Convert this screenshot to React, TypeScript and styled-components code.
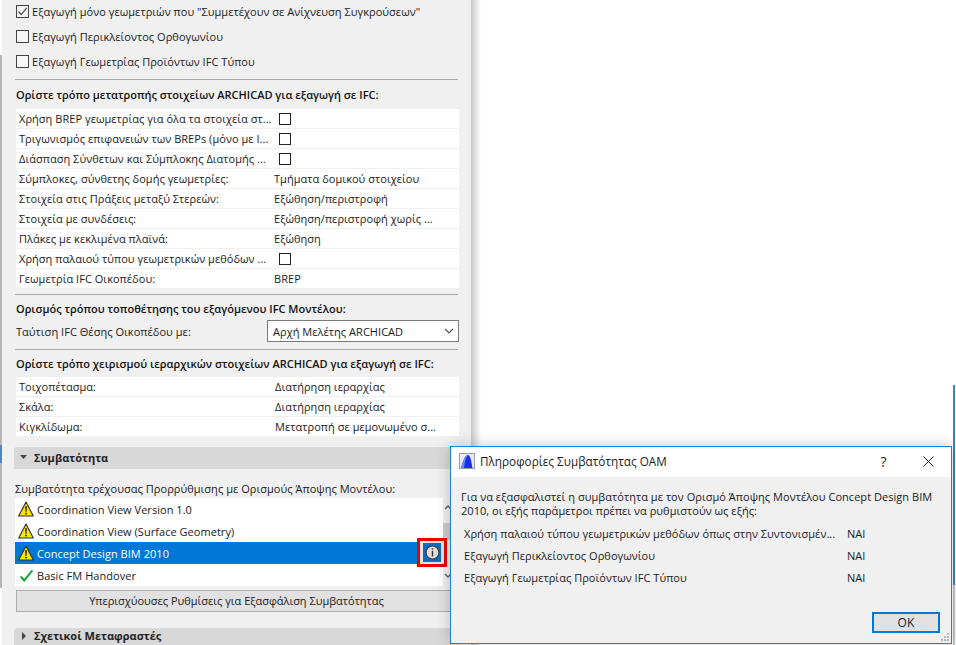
import React, { FC } from 'react';
import styled, { createGlobalStyle } from 'styled-components';

const GlobalStyle = createGlobalStyle`
    html, body {
        margin: 0;
        padding: 0;
        background: #fff;
    }
    body {
        width: 956px;
        height: 645px;
        overflow: hidden;
        font-family: 'Open Sans', 'Noto Sans', sans-serif;
        font-size: 11px;
        letter-spacing: 0.04px;
        color: #1a1a24;
    }
`;

const Screen = styled.div`
    position: relative;
    display: flex;
    width: 956px;
    height: 645px;
    overflow: hidden;
    background: #fff;
`;
const LeftEdge = styled.div`
    width: 2px;
    margin-top: 55px;
    height: 533px;
    background: linear-gradient(#b5b5b5 0 390px, #4a86c0 390px 408px, #b5b5b5 408px);
    flex: none;
`;
const Panel = styled.div`
    width: 470px;
    height: 645px;
    flex: none;
    box-sizing: border-box;
    padding: 0 12px 0 11px;
    background: #f0f0f0;
    border-right: 1px solid #c8c8c8;
`;
const PanelShadow = styled.div`
    width: 9px;
    height: 645px;
    flex: none;
    background: linear-gradient(90deg, #cfcfcf, #fff);
`;
const DesktopEdge = styled.div`
    position: absolute;
    top: 385px;
    right: 1px;
    width: 2px;
    height: 260px;
    background: linear-gradient(#2f86d6 0 200px, #c8c8c8 200px);
`;
const CheckStack = styled.div`
    margin-top: -1px;
`;
const CheckLine = styled.label`
    display: flex;
    align-items: center;
    gap: 3px;
    height: 25px;
    padding-left: 3px;
`;
const Box = styled.span<{ $small?: boolean }>`
    display: flex;
    align-items: center;
    justify-content: center;
    width: ${(p) => (p.$small ? 10 : 11)}px;
    height: ${(p) => (p.$small ? 10 : 11)}px;
    flex: none;
    border: 1px solid ${(p) => (p.$small ? '#222' : '#444')};
    background: ${(p) => (p.$small ? '#fff' : '#f6f6f6')};
`;
const Divider = styled.div<{ $top: number }>`
    height: 1px;
    background: #a8a8a8;
    margin: ${(p) => p.$top}px 1px 0 2px;
`;
const SectionTitle = styled.div<{ $height: number }>`
    display: flex;
    align-items: center;
    height: ${(p) => p.$height}px;
    padding-left: 3px;
    font-weight: 600;
    letter-spacing: 0;
    color: #111;
`;
const Table = styled.div`
    display: flex;
    flex-direction: column;
    gap: 1px;
    margin-left: 3px;
`;
const Row = styled.div<{ $labelWidth: number }>`
    display: grid;
    grid-template-columns: ${(p) => p.$labelWidth}px 1fr;
    align-items: center;
    height: 19px;
    background: #fff;
    padding-left: 3px;
`;
const Cell = styled.div`
    white-space: nowrap;
    overflow: hidden;
`;
const BoxCell = styled.div`
    display: flex;
    padding-left: 5px;
`;
const SelectRow = styled.div`
    display: flex;
    align-items: center;
    justify-content: space-between;
    height: 22px;
    padding-left: 3px;
    margin-top: -1px;
`;
const Select = styled.div`
    display: flex;
    align-items: center;
    justify-content: space-between;
    box-sizing: border-box;
    width: 192px;
    height: 22px;
    padding: 0 4px 0 5px;
    background: #fff;
    border: 1px solid #7a7a7a;
`;
const AccordionBar = styled.div<{ $top: number; $height: number }>`
    display: flex;
    align-items: center;
    gap: 7px;
    box-sizing: border-box;
    height: ${(p) => p.$height}px;
    margin: ${(p) => p.$top}px 0 0 1px;
    padding: 0 0 2px 6px;
    border-radius: 3px 3px 0 0;
    background: #d8d8d8;
    font-weight: 700;
    letter-spacing: 0;
    color: #222;
`;
const Caption = styled.div`
    margin: 10px 0 1px 2px;
    height: 18px;
    display: flex;
    align-items: center;
    white-space: nowrap;
`;
const ListWrap = styled.div`
    position: relative;
    margin-left: 2px;
`;
const List = styled.div`
    width: 428px;
    background: #fff;
`;
const ListRow = styled.div<{ $selected?: boolean }>`
    display: flex;
    align-items: center;
    gap: 3px;
    height: 22px;
    padding-left: 3px;
    background: ${(p) => (p.$selected ? '#0078d7' : 'transparent')};
    color: ${(p) => (p.$selected ? '#fff' : '#1a1a24')};
`;
const RowIcon = styled.span`
    display: flex;
    align-items: center;
    justify-content: center;
    width: 16px;
    flex: none;
`;
const ScrollTrack = styled.div`
    position: absolute;
    top: 0;
    left: 428px;
    width: 10px;
    height: 87px;
    display: flex;
    flex-direction: column;
    align-items: center;
    justify-content: space-between;
    padding: 7px 0;
    box-sizing: border-box;
`;
const ScrollThumb = styled.div`
    position: absolute;
    top: 25px;
    left: 0;
    width: 16px;
    height: 17px;
    background: #cdcdcd;
`;
const InfoHighlight = styled.div`
    position: absolute;
    top: 40px;
    left: 402px;
    width: 30px;
    height: 29px;
    box-sizing: border-box;
    border: 3px solid #ee0000;
    background: #e4e4e4;
    display: flex;
    align-items: center;
    justify-content: center;
`;
const InfoButton = styled.div`
    width: 18px;
    height: 19px;
    background: #0f6cbd;
    display: flex;
    align-items: center;
    justify-content: center;
`;
const WideButton = styled.div`
    display: flex;
    align-items: center;
    justify-content: center;
    box-sizing: border-box;
    width: 441px;
    height: 22px;
    margin: 4px 0 0 3px;
    padding-bottom: 1px;
    background: #e1e1e1;
    border: 1px solid #adadad;
    letter-spacing: 0;
`;

const Dialog = styled.div`
    position: absolute;
    left: 450px;
    top: 446px;
    width: 502px;
    height: 198px;
    box-sizing: border-box;
    display: flex;
    flex-direction: column;
    border: 1px solid #1883d7;
    background: #f0f0f0;
    box-shadow: 0 0 14px rgba(0, 0, 0, 0.22);
`;
const TitleBar = styled.div`
    display: flex;
    align-items: center;
    box-sizing: border-box;
    height: 30px;
    flex: none;
    background: #fff;
    padding: 0 0 2px 8px;
`;
const TitleText = styled.div`
    margin-left: 5px;
    font-size: 11.7px;
    flex: 1;
`;
const TitleGlyph = styled.div`
    display: flex;
    align-items: center;
    justify-content: center;
    width: 45px;
    font-size: 14px;
`;
const DialogBody = styled.div`
    display: flex;
    flex-direction: column;
    flex: 1;
    padding: 13px 10px 0;
`;
const DialogText = styled.div`
    line-height: 14px;
    white-space: nowrap;
`;
const InfoRows = styled.div`
    display: flex;
    flex-direction: column;
    margin-top: 4px;
`;
const InfoRow = styled.div`
    display: grid;
    grid-template-columns: 383px 1fr;
    align-items: center;
    height: 22px;
    padding-left: 3px;
`;
const DialogFooter = styled.div`
    display: flex;
    justify-content: flex-end;
    margin: auto 1px 0 0;
    padding-bottom: 10px;
`;
const OkButton = styled.div`
    display: flex;
    align-items: center;
    justify-content: center;
    box-sizing: border-box;
    width: 68px;
    height: 21px;
    background: #e1e1e1;
    border: 2px solid #0078d7;
    font-size: 12px;
`;
const Grip = styled.div`
    position: absolute;
    right: 1px;
    bottom: 1px;
    display: flex;
`;

const CheckBox: FC<{ checked?: boolean; small?: boolean }> = ({ checked, small }) => (
    <Box $small={small}>
        {checked && (
            <svg width='11' height='11' viewBox='0 0 11 11'>
                <path d='M1.5 5.5 4.2 8.5 9.8 1.8' fill='none' stroke='#555' strokeWidth='1.3' />
            </svg>
        )}
    </Box>
);

const Warning: FC = () => (
    <svg width='16' height='16' viewBox='0 0 16 16'>
        <path d='M8 1 15.3 15H.7Z' fill='#ffe500' stroke='#333' strokeWidth='1.2' strokeLinejoin='round' />
        <path d='M7.1 5.2h1.8L8.5 11h-1Z' fill='#222' />
        <rect x='7.2' y='11.8' width='1.6' height='1.6' fill='#222' />
    </svg>
);

const Tick: FC = () => (
    <svg width='15' height='13' viewBox='0 0 15 13'>
        <path d='M1.6 7.4 5.2 11.4 13.4 1.4' fill='none' stroke='#1fa64a' strokeWidth='2.2' />
    </svg>
);

const Triangle: FC<{ open?: boolean }> = ({ open }) => (
    <svg width='7' height='8' viewBox='0 0 7 8'>
        <path d={open ? 'M0 2H7L3.5 6Z' : 'M2 0 6 4 2 8Z'} fill='#444' />
    </svg>
);

const Chevron: FC = () => (
    <svg width='10' height='6' viewBox='0 0 10 6'>
        <path d='M1 1 5 5 9 1' fill='none' stroke='#555' strokeWidth='1.1' />
    </svg>
);

const ScrollArrow: FC<{ up?: boolean }> = ({ up }) => (
    <svg width='8' height='5' viewBox='0 0 8 5'>
        <path d={up ? 'M1 4 4 1 7 4' : 'M1 1 4 4 7 1'} fill='none' stroke='#606060' strokeWidth='1.4' />
    </svg>
);

const AppLogo: FC = () => (
    <svg width='16' height='16' viewBox='0 0 16 16'>
        <rect x='0.5' y='0.5' width='15' height='15' fill='#e8eaf6' stroke='#9a9aa8' />
        <path d='M2 15C4 8 6 2 9 2c2.5 0 3.5 7 4.5 13Z' fill='#1a30f0' />
        <path d='M2 15C4 8 6 2 9 2 6.5 5 5.5 10 5 15Z' fill='#6d88f5' />
    </svg>
);

const InfoIcon: FC = () => (
    <svg width='15' height='15' viewBox='0 0 15 15'>
        <circle cx='7.5' cy='7.5' r='6.5' fill='#dedede' stroke='#3a3a3a' strokeWidth='1.2' />
        <rect x='6.8' y='3.2' width='1.4' height='1.5' fill='#333' />
        <rect x='6.8' y='5.9' width='1.4' height='5.6' fill='#333' />
    </svg>
);

const Close: FC = () => (
    <svg width='11' height='11' viewBox='0 0 11 11'>
        <path d='M.5.5 10.5 10.5M10.5.5.5 10.5' stroke='#222' strokeWidth='1' />
    </svg>
);

const GripDots: FC = () => (
    <svg width='10' height='10' viewBox='0 0 10 10' fill='#b4b4b4'>
        <rect x='7' y='1' width='2' height='2' />
        <rect x='4' y='4' width='2' height='2' />
        <rect x='7' y='4' width='2' height='2' />
        <rect x='1' y='7' width='2' height='2' />
        <rect x='4' y='7' width='2' height='2' />
        <rect x='7' y='7' width='2' height='2' />
    </svg>
);

const conversionRows: { label: string; value?: string }[] = [
    { label: 'Χρήση BREP γεωμετρίας για όλα τα στοιχεία στ...' },
    { label: 'Τριγωνισμός επιφανειών των BREPs (μόνο με I...' },
    { label: 'Διάσπαση Σύνθετων και Σύμπλοκης Διατομής ...' },
    { label: 'Σύμπλοκες, σύνθετης δομής γεωμετρίες:', value: 'Τμήματα δομικού στοιχείου' },
    { label: 'Στοιχεία στις Πράξεις μεταξύ Στερεών:', value: 'Εξώθηση/περιστροφή' },
    { label: 'Στοιχεία με συνδέσεις:', value: 'Εξώθηση/περιστροφή χωρίς ...' },
    { label: 'Πλάκες με κεκλιμένα πλαϊνά:', value: 'Εξώθηση' },
    { label: 'Χρήση παλαιού τύπου γεωμετρικών μεθόδων ...' },
    { label: 'Γεωμετρία IFC Οικοπέδου:', value: 'BREP' },
];

const hierarchyRows = [
    { label: 'Τοιχοπέτασμα:', value: 'Διατήρηση ιεραρχίας' },
    { label: 'Σκάλα:', value: 'Διατήρηση ιεραρχίας' },
    { label: 'Κιγκλίδωμα:', value: 'Μετατροπή σε μεμονωμένο σ...' },
];

const App: FC = () => {
    return (
        <Screen>
            <GlobalStyle />
            <LeftEdge />
            <Panel>
                <CheckStack>
                    <CheckLine>
                        <CheckBox checked />
                        Εξαγωγή μόνο γεωμετριών που "Συμμετέχουν σε Ανίχνευση Συγκρούσεων"
                    </CheckLine>
                    <CheckLine>
                        <CheckBox />
                        Εξαγωγή Περικλείοντος Ορθογωνίου
                    </CheckLine>
                    <CheckLine>
                        <CheckBox />
                        Εξαγωγή Γεωμετρίας Προϊόντων IFC Τύπου
                    </CheckLine>
                </CheckStack>
                <Divider $top={5} />
                <SectionTitle $height={29}>Ορίστε τρόπο μετατροπής στοιχείων ARCHICAD για εξαγωγή σε IFC:</SectionTitle>
                <Table>
                    {conversionRows.map((row) => (
                        <Row key={row.label} $labelWidth={255}>
                            <Cell>{row.label}</Cell>
                            {row.value ? (
                                <Cell>{row.value}</Cell>
                            ) : (
                                <BoxCell>
                                    <CheckBox small />
                                </BoxCell>
                            )}
                        </Row>
                    ))}
                </Table>
                <Divider $top={6} />
                <SectionTitle $height={26}>Ορισμός τρόπου τοποθέτησης του εξαγόμενου IFC Μοντέλου:</SectionTitle>
                <SelectRow>
                    Ταύτιση IFC Θέσης Οικοπέδου με:
                    <Select>
                        Αρχή Μελέτης ARCHICAD
                        <Chevron />
                    </Select>
                </SelectRow>
                <Divider $top={7} />
                <SectionTitle $height={27}>Ορίστε τρόπο χειρισμού ιεραρχικών στοιχείων ARCHICAD για εξαγωγή σε IFC:</SectionTitle>
                <Table>
                    {hierarchyRows.map((row) => (
                        <Row key={row.label} $labelWidth={256}>
                            <Cell>{row.label}</Cell>
                            <Cell>{row.value}</Cell>
                        </Row>
                    ))}
                </Table>
                <AccordionBar $top={11} $height={22}>
                    <Triangle open />
                    Συμβατότητα
                </AccordionBar>
                <Caption>Συμβατότητα τρέχουσας Προρρύθμισης με Ορισμούς Άποψης Μοντέλου:</Caption>
                <ListWrap>
                    <List>
                        <ListRow>
                            <RowIcon>
                                <Warning />
                            </RowIcon>
                            Coordination View Version 1.0
                        </ListRow>
                        <ListRow>
                            <RowIcon>
                                <Warning />
                            </RowIcon>
                            Coordination View (Surface Geometry)
                        </ListRow>
                        <ListRow $selected>
                            <RowIcon>
                                <Warning />
                            </RowIcon>
                            Concept Design BIM 2010
                        </ListRow>
                        <ListRow>
                            <RowIcon>
                                <Tick />
                            </RowIcon>
                            Basic FM Handover
                        </ListRow>
                    </List>
                    <ScrollTrack>
                        <ScrollArrow up />
                        <ScrollThumb />
                        <ScrollArrow />
                    </ScrollTrack>
                    <InfoHighlight>
                        <InfoButton>
                            <InfoIcon />
                        </InfoButton>
                    </InfoHighlight>
                </ListWrap>
                <WideButton>Υπερισχύουσες Ρυθμίσεις για Εξασφάλιση Συμβατότητας</WideButton>
                <AccordionBar $top={16} $height={17}>
                    <Triangle />
                    Σχετικοί Μεταφραστές
                </AccordionBar>
            </Panel>
            <PanelShadow />
            <DesktopEdge />
            <Dialog>
                <TitleBar>
                    <AppLogo />
                    <TitleText>Πληροφορίες Συμβατότητας ΟΑΜ</TitleText>
                    <TitleGlyph>?</TitleGlyph>
                    <TitleGlyph>
                        <Close />
                    </TitleGlyph>
                </TitleBar>
                <DialogBody>
                    <DialogText>
                        Για να εξασφαλιστεί η συμβατότητα με τον Ορισμό Άποψης Μοντέλου Concept Design BIM
                        <br />
                        2010, οι εξής παράμετροι πρέπει να ρυθμιστούν ως εξής:
                    </DialogText>
                    <InfoRows>
                        <InfoRow>
                            <Cell>Χρήση παλαιού τύπου γεωμετρικών μεθόδων όπως στην Συντονισμέν...</Cell>
                            <Cell>ΝΑΙ</Cell>
                        </InfoRow>
                        <InfoRow>
                            <Cell>Εξαγωγή Περικλείοντος Ορθογωνίου</Cell>
                            <Cell>ΝΑΙ</Cell>
                        </InfoRow>
                        <InfoRow>
                            <Cell>Εξαγωγή Γεωμετρίας Προϊόντων IFC Τύπου</Cell>
                            <Cell>ΝΑΙ</Cell>
                        </InfoRow>
                    </InfoRows>
                    <DialogFooter>
                        <OkButton>OK</OkButton>
                    </DialogFooter>
                </DialogBody>
                <Grip>
                    <GripDots />
                </Grip>
            </Dialog>
        </Screen>
    );
};

export default App;
